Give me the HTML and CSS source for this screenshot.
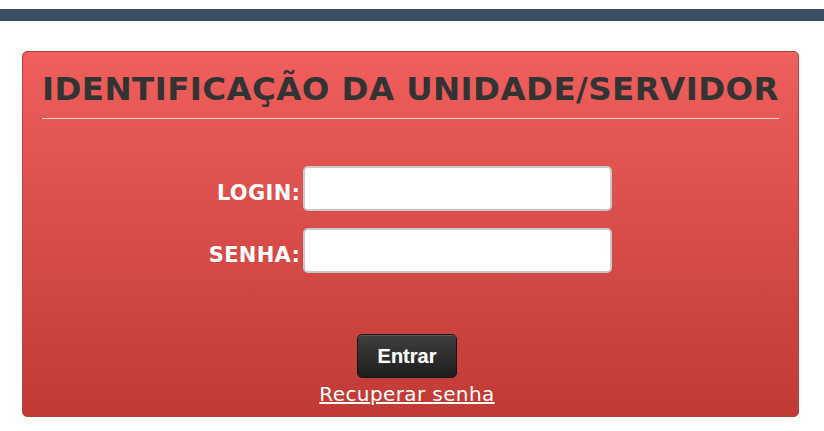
FILE: index.html
```html
<!DOCTYPE html>
<html lang="pt-BR">
<head>
    <meta charset="UTF-8">
    <meta name="viewport" content="width=device-width, initial-scale=1.0">
    <title>Identificação da Unidade/Servidor</title>
    <link rel="stylesheet" href="styles.css">
</head>
<body>
    <div class="topbar"></div>

    <div class="card">
        <h1>IDENTIFICAÇÃO DA UNIDADE/SERVIDOR</h1>

        <form class="login-form" onsubmit="return false;">
            <div class="fields">
                <label for="login">LOGIN:</label>
                <input type="text" id="login" name="login">

                <label for="senha">SENHA:</label>
                <input type="password" id="senha" name="senha">
            </div>

            <div class="actions">
                <button type="submit">Entrar</button>
                <a href="#">Recuperar senha</a>
            </div>
        </form>
    </div>
</body>
</html>
```

FILE: styles.css
```css
body {
  margin: 0;
  padding: 0;
  font-family: "DejaVu Sans", Verdana, sans-serif;
  background: #fff;
}

/* dark strip at the top */
.topbar {
  margin-top: 9px;
  height: 12px;
  background: #3a4f63;
}

/* red box */
.card {
  width: 777px;
  margin: 30px 0 0 22px;
  padding: 0 19px 10px;
  box-sizing: border-box;
  border: 1px solid #b9413b;
  border-radius: 5px;
  background: linear-gradient(to bottom, #ef5f5d, #c03a34);
}

.card h1 {
  margin: 18px 0 0;
  padding-bottom: 10px;
  border-bottom: 1px solid #f6d3d1;
  font-size: 32.5px;
  letter-spacing: 0.4px;
  color: #333;
  text-align: center;
}

.fields {
  display: grid;
  grid-template-columns: auto 309px;
  justify-content: center;
  column-gap: 3px;
  row-gap: 17px;
  margin-top: 47px;
}
.fields label {
  align-self: end;
  padding-bottom: 6px;
  text-align: right;
  font-size: 21px;
  font-weight: bold;
  letter-spacing: 0.3px;
  color: #fff;
}
.fields input {
  height: 45px;
  box-sizing: border-box;
  border: 2px solid #c9c9c9;
  border-radius: 5px;
  background: #fff;
  font-size: 18px;
  padding: 0 8px;
}

.actions {
  display: flex;
  flex-direction: column;
  align-items: center;
  gap: 4px;
  margin: 61px 7px 0 0;
}
.actions button {
  width: 100px;
  height: 44px;
  border: 1px solid #151515;
  border-radius: 5px;
  background: linear-gradient(to bottom, #3f3f3f, #1d1d1d);
  box-shadow: inset 0 1px 0 rgba(255, 255, 255, 0.15);
  color: #fff;
  font-family: "Liberation Sans", Arial, sans-serif;
  font-size: 20px;
  font-weight: bold;
  text-shadow: 0 0 1px rgba(255, 255, 255, 0.4);
  cursor: pointer;
}
.actions a {
  font-size: 20px;
  letter-spacing: 0.4px;
  color: #fff;
  text-decoration: underline;
}
```
